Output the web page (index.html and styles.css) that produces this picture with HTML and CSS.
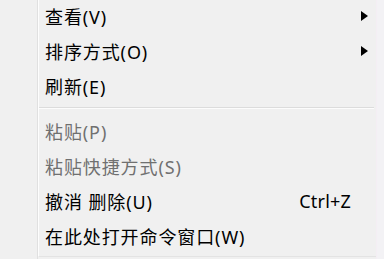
FILE: index.html
```html
<!DOCTYPE html>
<html lang="zh-CN">
<head>
<meta charset="utf-8">
<title>菜单</title>
<link rel="stylesheet" href="styles.css">
</head>
<body>
<div class="menu">
  <div class="gutter"></div>
  <div class="items">
    <div class="list">
      <div class="row"><span class="label">查看(V)</span><span class="arrow"></span></div>
      <div class="row"><span class="label">排序方式(O)</span><span class="arrow"></span></div>
      <div class="row"><span class="label">刷新(E)</span></div>
      <div class="sep"></div>
      <div class="row disabled"><span class="label">粘贴(P)</span></div>
      <div class="row disabled"><span class="label">粘贴快捷方式(S)</span></div>
      <div class="row"><span class="label">撤消 删除(U)</span><span class="shortcut">Ctrl+Z</span></div>
      <div class="row"><span class="label">在此处打开命令窗口(W)</span></div>
    </div>
  </div>
  <div class="edge"></div>
</div>
</body>
</html>
```

FILE: styles.css
```css
html, body {
  margin: 0;
  padding: 0;
  background: #f0f0f0;
}
body {
  width: 384px;
  height: 259px;
  overflow: hidden;
  font-family: "Noto Sans", "Noto Sans CJK SC", sans-serif;
  font-size: 18px;
  color: #000;
}
.menu {
  display: flex;
  height: 259px;
}
.gutter {
  width: 37px;
  flex: none;
  border-right: 1px solid #e0e0e0;
  background: #f0f0f0;
}
.items {
  flex: 1;
  border-left: 1px solid #fdfdfd;
  display: flex;
  flex-direction: column;
  border-bottom: 1px solid #e3e3e3;
  height: 256px;
}
.list {
  margin-top: -2px;
  padding-left: 6px;
  display: flex;
  flex-direction: column;
}
.row {
  display: flex;
  align-items: center;
  height: 35px;
  white-space: nowrap;
}
.label {
  flex: 1;
  letter-spacing: 0.9px;
}
.disabled {
  color: #707070;
}
.arrow {
  width: 0;
  height: 0;
  border-top: 5px solid transparent;
  border-bottom: 5px solid transparent;
  border-left: 7px solid #000;
  margin-right: 8px;
}
.shortcut {
  margin-right: 25px;
  letter-spacing: 0.2px;
}
.sep {
  height: 10px;
  margin-left: -6px;
  box-sizing: border-box;
  padding-top: 4px;
}
.sep::before {
  content: "";
  display: block;
  border-top: 1px solid #dcdcdc;
  border-bottom: 1px solid #fcfcfc;
  margin-right: 2px;
}
.edge {
  width: 7px;
  flex: none;
  border-left: 1px solid #f4eef4;
  background: #f3f2f5;
}
```
